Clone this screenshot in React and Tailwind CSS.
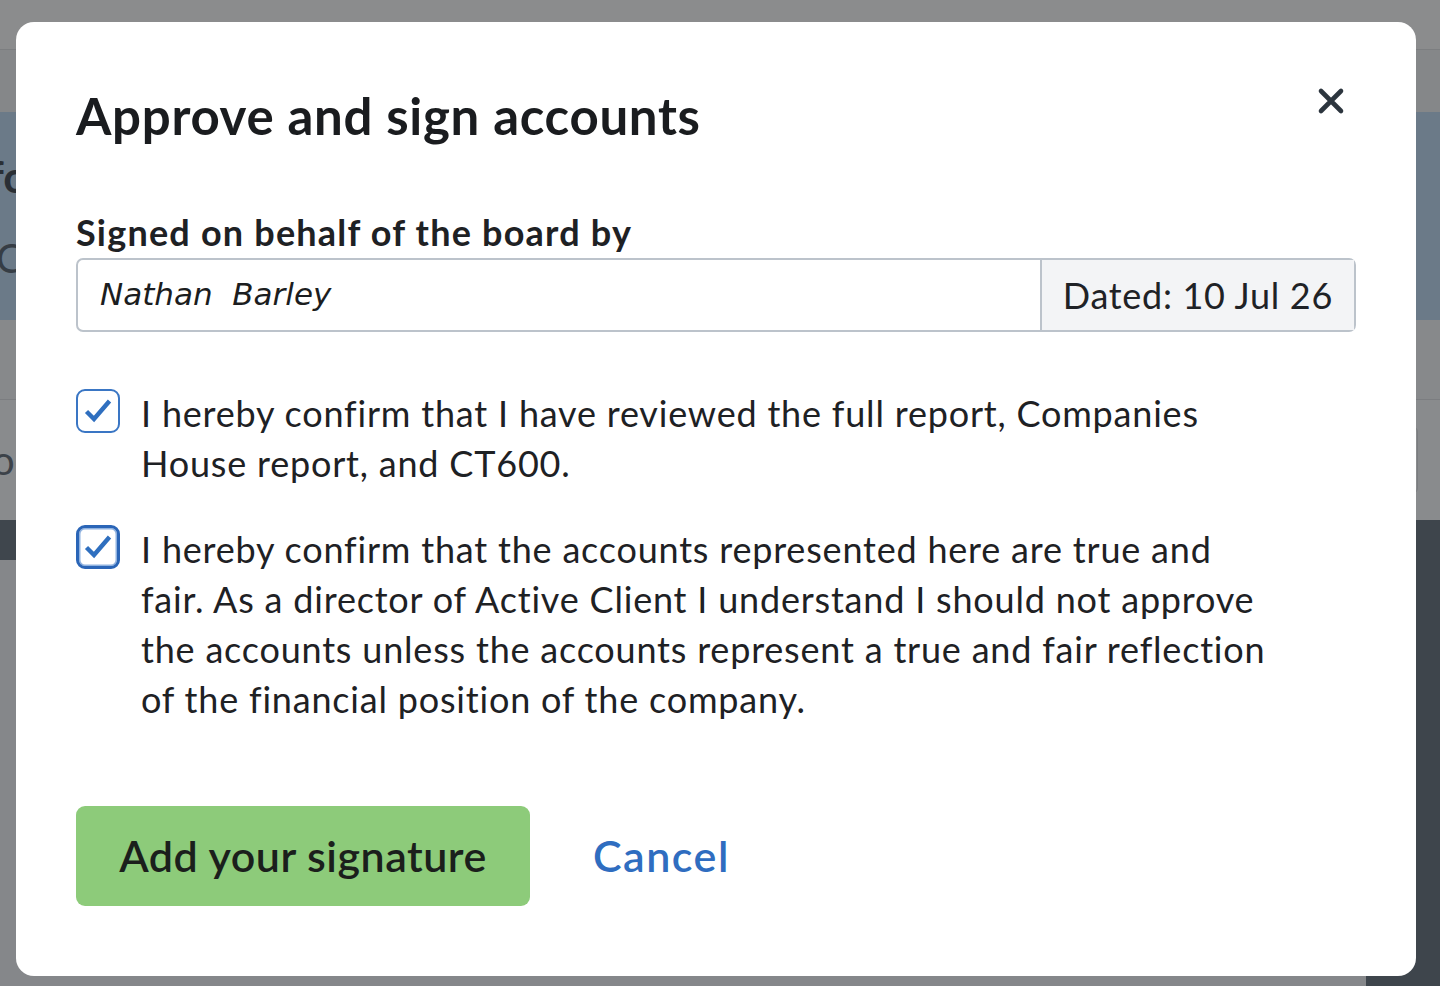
function Check({ thick }) {
  return (
    <span
      className={
        'relative mt-[1px] block h-[44px] w-[44px] shrink-0 rounded-[9px] bg-white ' +
        (thick ? 'border-[3px] border-[#2a65b7] ring-[1.5px] ring-inset ring-[#8fb2e0]' : 'border-2 border-[#3a76c4]')
      }
    >
      <svg className={'absolute ' + (thick ? '-left-[3px] -top-[3px]' : '-left-[2px] -top-[2px]')} width="44" height="44" viewBox="0 0 44 44" fill="none">
        <path d="M10.5 22.5L18 30L33.5 12" stroke="#2f6fbf" strokeWidth="4.4" strokeLinecap="butt" strokeLinejoin="miter" />
      </svg>
    </span>
  );
}

export default function App() {
  return (
    <div className="relative h-[986px] w-[1440px] overflow-hidden bg-[#85878a] font-['Lato',sans-serif]">
      {/* page behind, already dimmed */}
      <div className="flex h-full flex-col">
        <div className="h-[50px] border-b border-[#7c7e80] bg-[#8b8c8d]" />
        <div className="h-[62px] bg-[#858789]" />
        <div className="flex h-[208px] flex-col justify-center gap-[40px] bg-[#6b7a88] text-[44px] leading-none text-[#2a2f35]">
          <span className="-ml-[12px] font-bold">fo</span>
          <span className="-ml-[4px] text-[40px] text-[#363d45]">C</span>
        </div>
        <div className="h-[80px] border-b border-[#7b7d80] bg-[#87898b]" />
        <div className="flex h-[120px] items-center justify-between bg-[#898b8d]">
          <span className="-ml-[8px] text-[40px] text-[#3c4249]">oo</span>
          <div className="mr-[22px] h-[68px] w-[60px] rounded-[6px] border border-[#7a7c7f]" />
        </div>
        <div className="flex flex-1">
          <div className="flex flex-1 flex-col">
            <div className="h-[40px] bg-[#3f464d]" />
            <div className="flex-1 bg-[#85878a]" />
          </div>
          <div className="w-[74px] bg-[#3e454c]" />
        </div>
      </div>

      {/* modal */}
      <div className="absolute left-[16px] top-[22px] flex h-[954px] w-[1400px] flex-col rounded-[18px] bg-white px-[60px] pt-[64px] text-[#1e2124]">
        <div className="flex items-start justify-between">
          <h1 className="text-[51px] font-bold leading-[60px] tracking-[0.7px] text-[#1a1c1f]">Approve and sign accounts</h1>
          <button className="mr-[11px] mt-[1px]">
            <svg width="28" height="28" viewBox="0 0 28 28" fill="none">
              <path d="M4 4L24 24M24 4L4 24" stroke="#2c353e" strokeWidth="4.6" strokeLinecap="round" />
            </svg>
          </button>
        </div>

        <label className="mt-[64px] text-[36px] font-bold leading-[44px] tracking-[1.2px]">Signed on behalf of the board by</label>
        <div className="mt-[4px] flex h-[74px] w-[1280px] rounded-[7px] border-2 border-[#bcc3cb]">
          <div className="flex flex-1 items-center pb-[2px] pl-[22px] font-['DejaVu_Sans',cursive] text-[31px] italic text-[#1b1d20]">
            Nathan&nbsp;&nbsp;Barley
          </div>
          <div className="flex items-center border-l-2 border-[#bcc3cb] bg-[#f3f4f6] px-[21px] text-[36px] tracking-[0.7px] text-[#1f2226]">
            Dated: 10 Jul 26
          </div>
        </div>

        <div className="mt-[56px] flex gap-[21px]">
          <Check />
          <p className="text-[36px] leading-[50px] tracking-[0.8px]">
            I hereby confirm that I have reviewed the full report, Companies
            <br />
            House report, and CT600.
          </p>
        </div>

        <div className="mt-[36px] flex gap-[21px]">
          <Check thick />
          <p className="text-[36px] leading-[50px] tracking-[0.8px]">
            I hereby confirm that the accounts represented here are true and
            <br />
            fair. As a director of Active Client I understand I should not approve
            <br />
            the accounts unless the accounts represent a true and fair reflection
            <br />
            of the financial position of the company.
          </p>
        </div>

        <div className="mt-[82px] flex items-center gap-[63px]">
          <button className="flex h-[100px] w-[454px] items-center justify-center rounded-[9px] bg-[#8dcb7a] text-[43px] font-semibold tracking-[0.5px] text-[#1b1f1c]">
            Add your signature
          </button>
          <button className="text-[43px] font-semibold tracking-[1.5px] text-[#2f6dc0]">Cancel</button>
        </div>
      </div>
    </div>
  );
}
